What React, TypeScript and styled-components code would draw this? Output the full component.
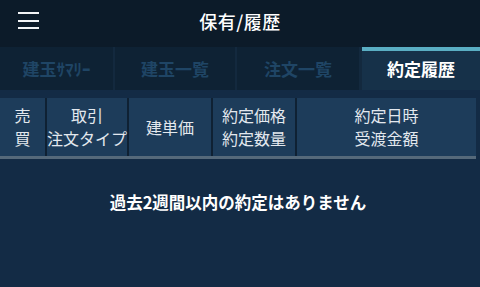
import styled, { createGlobalStyle } from "styled-components";

const GlobalStyle = createGlobalStyle`
  html, body {
    margin: 0;
    padding: 0;
    background: #132b45;
  }
  body {
    font-family: "Noto Sans CJK JP", "Noto Sans", sans-serif;
  }
`;

const tabs = ["建玉ｻﾏﾘｰ", "建玉一覧", "注文一覧", "約定履歴"];

const columns = [
  { width: "45px", lines: ["売", "買"] },
  { width: "80px", lines: ["取引", "注文タイプ"] },
  { width: "82px", lines: ["建単価"] },
  { width: "82px", lines: ["約定価格", "約定数量"] },
  { width: "1fr", lines: ["約定日時", "受渡金額"] },
];

const App: React.FC = () => {
  return (
    <>
      <GlobalStyle />
      <Page>
        <Header>
          <MenuButton aria-label="menu">
            <span />
            <span />
            <span />
          </MenuButton>
          <Title>保有/履歴</Title>
        </Header>
        <TabBar>
          {tabs.map((t, i) => (
            <Tab key={t} $active={i === tabs.length - 1}>
              {t}
            </Tab>
          ))}
        </TabBar>
        <Table>
          <HeadRow $cols={columns.map((c) => c.width).join(" ")}>
            {columns.map((c) => (
              <HeadCell key={c.lines.join()}>
                {c.lines.map((l) => (
                  <span key={l}>{l}</span>
                ))}
              </HeadCell>
            ))}
          </HeadRow>
          <Empty>過去2週間以内の約定はありません</Empty>
        </Table>
      </Page>
    </>
  );
};

export default App;

const Page = styled.div`
  width: 480px;
  height: 287px;
  display: flex;
  flex-direction: column;
  background: #132b45;
  overflow: hidden;
`;

const Header = styled.div`
  position: relative;
  height: 47px;
  flex-shrink: 0;
  background: #0c1b29;
  display: flex;
  align-items: center;
  justify-content: center;
`;

const MenuButton = styled.div`
  position: absolute;
  left: 18px;
  top: 12px;
  width: 21px;
  height: 17px;
  display: flex;
  flex-direction: column;
  justify-content: space-between;

  span {
    display: block;
    height: 2px;
    background: #f2f4f6;
  }
`;

const Title = styled.div`
  color: #ffffff;
  font-size: 18px;
  font-weight: 500;
  margin-top: -6px;
  letter-spacing: 0.5px;
`;

const TabBar = styled.div`
  height: 43px;
  flex-shrink: 0;
  display: grid;
  grid-template-columns: 113px 120px 122px 1fr;
  column-gap: 2px;
  background: #13293e;
`;

const Tab = styled.div<{ $active?: boolean }>`
  display: flex;
  align-items: center;
  justify-content: center;
  box-sizing: border-box;
  font-size: 17px;
  font-weight: 700;
  background: ${(p) => (p.$active ? "#163149" : "#0e2234")};
  color: ${(p) => (p.$active ? "#ffffff" : "#1f4565")};
  border-top: 4px solid ${(p) => (p.$active ? "#5aaec3" : "transparent")};
  padding-bottom: 4px;
  ${(p) => (p.$active ? "margin-left: 1px;" : "")}
`;

const Table = styled.div`
  margin-top: 8px;
  padding-right: 4px;
  display: flex;
  flex-direction: column;
`;

const HeadRow = styled.div<{ $cols: string }>`
  display: grid;
  grid-template-columns: ${(p) => p.$cols};
  column-gap: 2px;
  height: 58px;
  background: #0f2133;
  border-bottom: 3px solid #55697a;
`;

const HeadCell = styled.div`
  background: #1d3c5a;
  color: #e3e8ee;
  font-size: 16px;
  display: flex;
  flex-direction: column;
  align-items: center;
  justify-content: center;
  line-height: 23px;
  white-space: nowrap;
`;

const Empty = styled.div`
  margin-top: 31px;
  text-align: center;
  color: #ffffff;
  font-size: 16.5px;
  font-weight: 700;
`;
